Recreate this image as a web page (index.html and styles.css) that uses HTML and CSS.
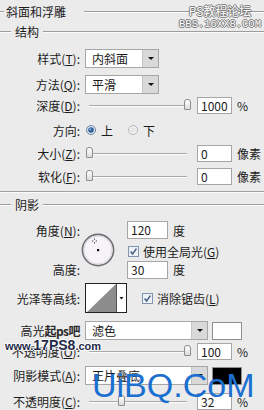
FILE: index.html
```html
<!DOCTYPE html>
<html lang="zh-CN">
<head>
    <meta charset="UTF-8">
    <title>斜面和浮雕</title>
    <link rel="stylesheet" href="styles.css">
</head>
<body>
<div class="panel">

    <div class="legend legend-main"><span>斜面和浮雕</span></div>
    <div class="legend legend-sub"><span>结构</span></div>

    <div class="row r-style">
        <span class="label">样式(<u>T</u>):</span>
        <div class="select"><span class="select-text">内斜面</span><span class="select-btn"></span></div>
    </div>

    <div class="row r-method">
        <span class="label">方法(<u>Q</u>):</span>
        <div class="select"><span class="select-text">平滑</span><span class="select-btn"></span></div>
    </div>

    <div class="row r-depth">
        <span class="label">深度(<u>D</u>):</span>
        <div class="slider"><div class="track"></div><div class="thumb" style="left: 98.5px"></div></div>
        <span class="num">1000</span>
        <span class="unit">%</span>
    </div>

    <div class="row r-dir">
        <span class="label">方向:</span>
        <svg class="radio radio-on" width="10" height="10" viewBox="0 0 10 10">
            <circle cx="5" cy="5" r="4.5" fill="#dfe6ee" stroke="#6f87a3"/>
            <circle cx="5" cy="5" r="2.8" fill="#2f5f98"/>
            <circle cx="4.3" cy="4.2" r="1" fill="#8fb2dc"/>
        </svg>
        <span class="radio-text">上</span>
        <svg class="radio radio-off" width="10" height="10" viewBox="0 0 10 10">
            <circle cx="5" cy="5" r="4.5" fill="#f4f4f4" stroke="#b4b4b4"/>
            <circle cx="5" cy="5" r="2.8" fill="#e6e6e6"/>
        </svg>
        <span class="radio-text">下</span>
    </div>

    <div class="row r-size">
        <span class="label">大小(<u>Z</u>):</span>
        <div class="slider"><div class="track"></div><div class="thumb" style="left: 0.5px"></div></div>
        <span class="num">0</span>
        <span class="unit">像素</span>
    </div>

    <div class="row r-soft">
        <span class="label">软化(<u>F</u>):</span>
        <div class="slider"><div class="track"></div><div class="thumb" style="left: 0.5px"></div></div>
        <span class="num">0</span>
        <span class="unit">像素</span>
    </div>

    <div class="divider"></div>

    <div class="legend legend-sub legend-shadow"><span>阴影</span></div>

    <div class="angle">
        <span class="label cell a-label">角度(<u>N</u>):</span>
        <svg class="dial" width="34" height="34" viewBox="0 0 34 34">
            <circle cx="17" cy="17" r="15.6" fill="#f6f4f9" stroke="#6d6d72" stroke-width="1.6"/>
            <circle cx="17" cy="17" r="14" fill="none" stroke="#d8d6de" stroke-width="1"/>
            <rect x="16" y="16" width="2.2" height="2.2" fill="#111"/>
            <path d="M13.5 5.5v5M11 8h5" stroke="#333" stroke-width="0.9"/>
            <rect x="12.4" y="6.8" width="2.2" height="2.2" fill="#fff"/>
        </svg>
        <div class="cell a-input"><span class="num num-wide">120</span><span class="unit">度</span></div>
        <div class="cell a-check">
            <span class="check">
                <svg width="11" height="11" viewBox="0 0 11 11">
                    <rect x="0.5" y="0.5" width="10" height="10" fill="#eef1f5" stroke="#7f95ae"/>
                    <path d="M2.6 5.6l2 2.4 3.8-5.4" fill="none" stroke="#4a6388" stroke-width="1.6"/>
                </svg>
                <span>使用全局光(<u>G</u>)</span>
            </span>
        </div>
        <span class="label cell h-label">高度:</span>
        <div class="cell h-input"><span class="num num-wide">30</span><span class="unit">度</span></div>
    </div>

    <div class="row r-contour">
        <span class="label">光泽等高线:</span>
        <svg class="contour" width="42" height="30" viewBox="0 0 42 30">
            <rect x="0.5" y="0.5" width="41" height="29" fill="#fff" stroke="#222"/>
            <polygon points="2,29 31,1 31,29" fill="#8d8d8d"/>
            <line x1="31.5" y1="1" x2="31.5" y2="29" stroke="#555"/>
            <polygon points="34.5,14 38.5,14 36.5,16.5" fill="#111"/>
        </svg>
        <span class="check check-contour">
            <svg width="11" height="11" viewBox="0 0 11 11">
                <rect x="0.5" y="0.5" width="10" height="10" fill="#eef1f5" stroke="#7f95ae"/>
                <path d="M2.6 5.6l2 2.4 3.8-5.4" fill="none" stroke="#4a6388" stroke-width="1.6"/>
            </svg>
            <span>消除锯齿(<u>L</u>)</span>
        </span>
    </div>

    <div class="row r-hl">
        <span class="label">高光<b class="label-wm">起ps吧</b></span>
        <div class="select select-wide"><span class="select-text">滤色</span><span class="select-btn"></span></div>
        <span class="swatch swatch-white"></span>
    </div>

    <div class="row r-op1">
        <span class="label">不透明度(<u>O</u>):</span>
        <div class="slider"><div class="track"></div><div class="thumb" style="left: 98.5px"></div></div>
        <span class="num">100</span>
        <span class="unit">%</span>
    </div>

    <div class="row r-shmode">
        <span class="label">阴影模式(<u>A</u>):</span>
        <div class="select select-wide"><span class="select-text">正片叠底</span><span class="select-btn"></span></div>
        <span class="swatch swatch-black"></span>
    </div>

    <div class="row r-op2">
        <span class="label">不透明度(<u>C</u>):</span>
        <div class="slider"><div class="track"></div><div class="thumb" style="left: 32.9px"></div></div>
        <span class="num">32</span>
        <span class="unit">%</span>
    </div>

    <!-- watermarks laid over the dialog -->
    <div class="wm-top">
        <div class="wm-top-1">PS教程论坛</div>
        <div class="wm-top-2">BBS.16XX8.COM</div>
    </div>
    <div class="wm-site">www.<b>17PS8</b>.com</div>
    <div class="wm-big">UiBQ.CoM</div>
</div>
</body>
</html>
```

FILE: styles.css
```css
/* --- Base --- */
body {
    margin: 0;
    width: 264px;
    height: 410px;
    overflow: hidden;
    background-color: #ebebeb;
    font-family: "Noto Sans CJK SC", "Noto Sans", sans-serif;
    font-size: 12px;
    color: #1c1c1c;
}

.panel {
    position: relative;
    height: 410px;
}

u { text-decoration: underline; }

/* --- Group titles with etched lines --- */
.legend {
    display: flex;
    align-items: center;
    line-height: 14px;
}
.legend::before,
.legend::after {
    content: "";
    border-top: 1px solid #9c9c9c;
    border-bottom: 1px solid #fbfbfb;
}
.legend::after { flex: 1; }

.legend-main { height: 24px; }
.legend-main::before { width: 4px; margin-right: 2px; }
.legend-main span { margin-right: 18px; }

.legend-sub { height: 16px; }
.legend-sub::before { width: 11px; margin-right: 4px; }
.legend-sub span { margin-right: 4px; }

.legend-shadow { margin-top: 4px; }

.divider {
    margin-top: 6px;
    border-top: 1px solid #a2a2a2;
    border-bottom: 1px solid #fbfbfb;
}

/* --- Rows --- */
.row {
    display: flex;
    align-items: center;
}

.label {
    width: 80px;
    flex: none;
    text-align: right;
    white-space: nowrap;
}

.r-style   { margin-top: 9px; height: 19px; }
.r-method  { margin-top: 7px; height: 19px; }
.r-depth   { margin-top: 3px; height: 17px; }
.r-dir     { margin-top: 7px; height: 18px; }
.r-size    { margin-top: 6px; height: 17px; }
.r-soft    { margin-top: 6px; height: 17px; }
.r-contour { margin-top: 4px; height: 30px; }
.r-hl      { margin-top: 8px; height: 19px; }
.r-op1     { margin-top: 3px; height: 17px; }
.r-shmode  { margin-top: 6px; height: 19px; }
.r-op2     { margin-top: 8px; height: 17px; }

/* --- Dropdowns --- */
.select {
    display: flex;
    width: 74px;
    height: 19px;
    margin-left: 5px;
    box-sizing: border-box;
    border: 1px solid #a6a6a6;
    background-color: #fff;
    flex: none;
}
.select-wide { width: 123px; }

.select-text {
    flex: 1;
    padding-left: 6px;
    line-height: 17px;
    white-space: nowrap;
    overflow: hidden;
}

.select-btn {
    width: 15px;
    display: flex;
    align-items: center;
    justify-content: center;
    background-color: #d9d9d9;
    border-left: 1px solid #c6c6c6;
}
.select-btn::after {
    content: "";
    border-left: 3px solid transparent;
    border-right: 3px solid transparent;
    border-top: 3px solid #111;
}

/* --- Sliders --- */
.slider {
    position: relative;
    width: 108px;
    height: 17px;
    margin-left: 5px;
    padding: 0 6px 0 4px;
    box-sizing: border-box;
    display: flex;
    align-items: center;
    flex: none;
}
.track {
    flex: 1;
    border-top: 1px solid #a9a9a9;
    border-bottom: 1px solid #fdfdfd;
}
.thumb {
    position: absolute;
    top: 2px;
    width: 7px;
    height: 11px;
    box-sizing: border-box;
    border: 1px solid #8c8c8c;
    border-radius: 3px 3px 1px 1px;
    background: linear-gradient(#ffffff, #dcdcdc);
}

/* --- Number fields --- */
.num {
    width: 35px;
    height: 17px;
    box-sizing: border-box;
    margin-left: 4px;
    padding-left: 3px;
    border: 1px solid #a6a6a6;
    background-color: #fff;
    line-height: 15px;
    flex: none;
}
.num-wide {
    width: 41px;
    height: 18px;
    margin-left: 0;
    line-height: 16px;
}
.unit { margin-left: 5px; }

/* --- Radios & checkboxes --- */
.radio { flex: none; }
.radio-on { margin-left: 6px; }
.radio-off { margin-left: 15px; }
.radio-text { margin-left: 5px; }

.check {
    display: flex;
    align-items: center;
    gap: 4px;
    white-space: nowrap;
}
.check svg { flex: none; }
.check-contour { margin-left: 15px; }

/* --- Angle block --- */
.angle {
    display: grid;
    grid-template-columns: 80px 47px auto;
    grid-template-rows: 18px 21px 19px;
    margin-top: 8px;
}
.cell {
    display: flex;
    align-items: center;
    justify-content: flex-end;
}
.a-label { grid-column: 1; grid-row: 1; }
.h-label { grid-column: 1; grid-row: 3; }
.a-input, .a-check, .h-input {
    grid-column: 3;
    justify-content: flex-start;
}
.a-input { grid-row: 1; }
.a-check { grid-row: 2; padding-top: 3px; margin-left: 1px; }
.h-input { grid-row: 3; }

.dial {
    grid-column: 2;
    grid-row: 1 / 4;
    margin: 12px 0 0 1px;
}

.contour {
    margin-left: 5px;
    flex: none;
}

/* --- Colour swatches --- */
.swatch {
    width: 30px;
    height: 18px;
    margin-left: 4px;
    box-sizing: border-box;
    border: 1px solid #8f8f8f;
    flex: none;
}
.swatch-white { background-color: #fff; }
.swatch-black { background-color: #000; }

.label-wm {
    font-weight: bold;
    color: #2a2a2a;
    letter-spacing: -0.5px;
}

/* --- Watermarks --- */
.wm-top {
    position: absolute;
    top: 3px;
    left: 178px;
    width: 84px;
    text-align: center;
    color: #fff;
    text-shadow: 1px 0 #777, -1px 0 #777, 0 1px #777, 0 -1px #777;
}
.wm-top-1 { font-size: 12px; line-height: 16px; }
.wm-top-2 {
    font-family: "Liberation Mono", monospace;
    font-size: 10.5px;
    line-height: 11px;
}

.wm-site {
    position: absolute;
    top: 337px;
    left: 5px;
    font-family: "Liberation Sans", Arial, sans-serif;
    font-size: 11px;
    font-weight: bold;
    color: #1f2a48;
    text-shadow: 1px 0 #fff, -1px 0 #fff, 0 1px #fff, 0 -1px #fff;
}
.wm-site b { font-size: 14px; }

.wm-big {
    position: absolute;
    top: 368px;
    left: 92px;
    font-family: "Liberation Sans", Arial, sans-serif;
    font-size: 34px;
    line-height: 34px;
    color: #1b6fd0;
}
```
